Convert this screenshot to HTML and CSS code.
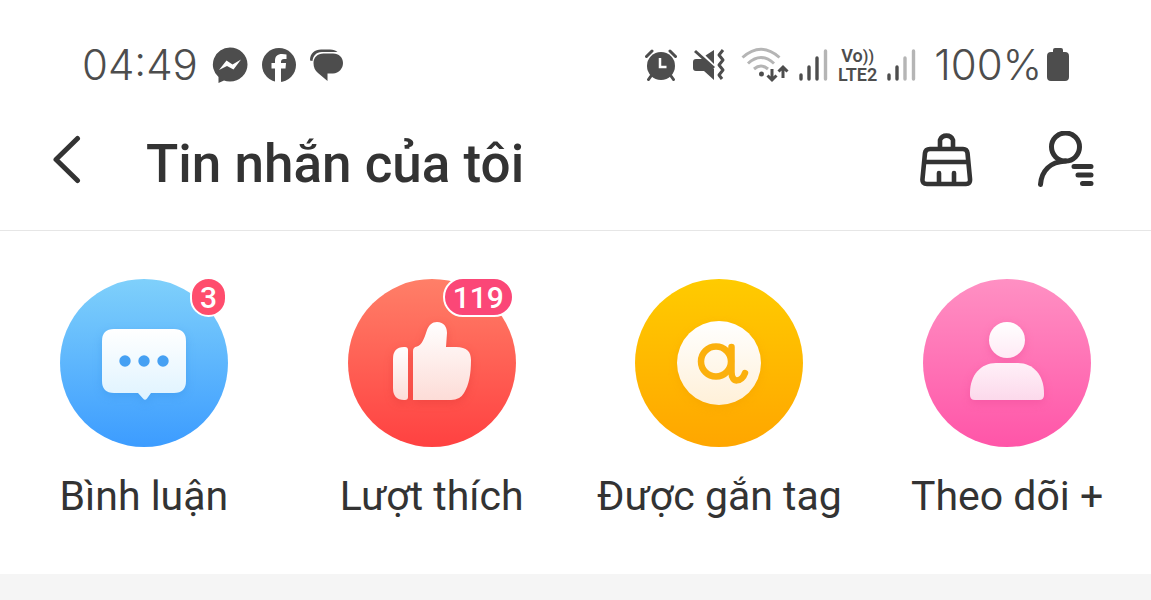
FILE: index.html
```html
<!DOCTYPE html>
<html lang="vi">
<head>
<meta charset="utf-8">
<meta name="viewport" content="width=device-width, initial-scale=1">
<title>Tin nhắn của tôi</title>
<link rel="stylesheet" href="styles.css">
</head>
<body>
<div class="status">
  <div class="status-group status-left">
    <span class="status-text">04:49</span>
    <svg width="36" height="36" viewBox="0 0 36 36" aria-hidden="true">
      <path fill="#4d4d4d" d="M18 0.5A17.5 17 0 0 1 18 34.5Q14.500 34.500 12 33.500L6.500 36V30A17.500 17 0 0 1 18 .5Z"/>
      <path fill="#fff" d="M7 23L14.500 13.500 20.500 17.500 29 12.500 21.500 22.500 15 19Z"/>
    </svg>
    <svg width="34" height="34" viewBox="0 0 34 34" aria-hidden="true">
      <circle cx="17" cy="17" r="17" fill="#4d4d4d"/>
      <path fill="#fff" d="M13 34V20.500H9.500V15H13V13C13 8 15.500 6 20 6Q22.500 6 24.500 6.500V11H22Q19 11 19 14V15H24L23.500 20.500H19V34Z"/>
    </svg>
    <svg width="34" height="34" viewBox="0 0 34 34" aria-hidden="true">
      <path fill="#4d4d4d" d="M0 12.500C0 5 5 1.500 11 1.500H20Q25 1.500 27.500 4H12C6 4 3 8 2.500 13Z"/>
      <path fill="#4d4d4d" d="M13.500 5.500H23C29 5.500 33 9.500 33 15S29 25 23 25.500H17.500V33L8 25C5 22.500 3.500 19.500 3.500 15 3.500 9.500 7.500 5.500 13.500 5.500Z"/>
    </svg>
  </div>
  <div class="status-group status-right">
    <svg width="32" height="32" viewBox="0 0 32 32" aria-hidden="true">
      <circle cx="16" cy="17" r="14" fill="#4d4d4d"/>
      <path d="M1.500 7.500L7 2M30.500 7.500L25 2M6 27L3.500 30.500M26 27L28.500 30.500" stroke="#4d4d4d" stroke-width="3" stroke-linecap="round"/>
      <path d="M15 9V18H21.500" fill="none" stroke="#fff" stroke-width="2.500"/>
    </svg>
    <svg width="32" height="32" viewBox="0 0 32 32" aria-hidden="true">
      <path fill="#4d4d4d" d="M12.500 6.500L21 1V15ZM3 10H10L21 20V31L11 22H3Q0 22 0 19V13Q0 10 3 10Z"/>
      <path d="M2 2L21 19" stroke="#4d4d4d" stroke-width="3"/>
      <path d="M30 1L26 6 30 11 26 16 30 21 26 26 29 30" fill="none" stroke="#4d4d4d" stroke-width="3" stroke-linejoin="round"/>
    </svg>
    <svg width="48" height="36" viewBox="0 0 48 36" aria-hidden="true">
      <path d="M1.500 10.500Q20 -6 38.500 10.500M7 16.500Q20 4.500 33 16.500M13 22Q20 16 27 22" fill="none" stroke="#b5b5b5" stroke-width="3"/>
      <circle cx="20.500" cy="27" r="2.500" fill="#4d4d4d"/>
      <path d="M31 22V33M26.500 28.500L31 33 35.500 28.500M42 31V20M37.500 24.500L42 20 46.500 24.500" fill="none" stroke="#4d4d4d" stroke-width="3"/>
    </svg>
    <svg width="29" height="32" viewBox="0 0 29 32" aria-hidden="true">
      <path d="M2 26V30M10 18V30M18 9V30" stroke="#4d4d4d" stroke-width="3.400" stroke-linecap="round"/>
      <path d="M26.500 2V30" stroke="#b5b5b5" stroke-width="3.400" stroke-linecap="round"/>
    </svg>
    <span class="volte"><span>Vo<small>))</small></span><span>LTE2</span></span>
    <svg width="29" height="32" viewBox="0 0 29 32" aria-hidden="true">
      <path d="M2 26V30M10 18V30" stroke="#4d4d4d" stroke-width="3.400" stroke-linecap="round"/>
      <path d="M18 9V30M26.500 2V30" stroke="#b5b5b5" stroke-width="3.400" stroke-linecap="round"/>
    </svg>
    <span class="battery">
      <span class="status-text">100%</span>
      <svg width="24" height="34" viewBox="0 0 24 34" aria-hidden="true">
        <path fill="#4d4d4d" d="M7 4V2Q7 0 9 0H15Q17 0 17 2V4H19Q23 4 23 8V29Q23 33 19 33H5Q1 33 1 29V8Q1 4 5 4Z"/>
      </svg>
    </span>
  </div>
</div>
<header class="header">
  <button class="icon-button" type="button" aria-label="Quay lại">
    <svg width="30" height="50" viewBox="0 0 30 50"><path d="M25.500 3.500L4 24.500 25.500 45.500" fill="none" stroke="#333" stroke-width="5" stroke-linecap="round" stroke-linejoin="round"/></svg>
  </button>
  <h1 class="title">Tin nhắn của tôi</h1>
  <button class="icon-button" type="button" aria-label="Dọn dẹp">
    <svg width="54" height="58" viewBox="0 0 54 58" fill="none" stroke="#333" stroke-width="4.600" stroke-linecap="round" stroke-linejoin="round">
      <path d="M20 18V9A7 7 0 0 1 33 9V18M10 18H43Q47 18 47.500 22L50 48Q50.500 53 46 53H7Q2 53 2.500 48L5 22Q5.500 18 10 18ZM5 31H48M19 42V53M34 42V53"/>
    </svg>
  </button>
  <button class="icon-button" type="button" aria-label="Danh sách theo dõi">
    <svg width="58" height="58" viewBox="0 0 58 58" fill="none" stroke="#333" stroke-width="5" stroke-linecap="round">
      <circle cx="27.500" cy="16" r="14"/>
      <path d="M27.500 30C12 31 3.500 40 2.500 53.500M36 35.500H53M40 44H53M44.500 52.500H53"/>
    </svg>
  </button>
</header>
<nav class="shortcuts">
  <a class="shortcut" href="#comments">
    <span class="disc disc-blue">
      <svg class="glyph" viewBox="0 0 168 168" aria-hidden="true">
        <defs><linearGradient id="g1" x2="0" y2="1"><stop stop-color="#fff"/><stop offset="1" stop-color="#dff3ff"/></linearGradient></defs>
        <path fill="url(#g1)" d="M54 50H114Q126 50 126 62V102Q126 114 114 114H91L87 119.500Q85 122 83 119.500L78 114H54Q42 114 42 102V62Q42 50 54 50Z"/>
        <g fill="#45a0f3"><circle cx="65" cy="82" r="5.700"/><circle cx="84" cy="82" r="5.700"/><circle cx="103" cy="82" r="5.700"/></g>
      </svg>
      <span class="badge">3</span>
    </span>
    <span class="label">Bình luận</span>
  </a>
  <a class="shortcut" href="#likes">
    <span class="disc disc-red">
      <svg class="glyph" viewBox="0 0 168 168" aria-hidden="true">
        <defs><linearGradient id="g2" x2="0" y2="1"><stop stop-color="#fff"/><stop offset="1" stop-color="#fddcd7"/></linearGradient></defs>
        <path fill="url(#g2)" d="M56 68H57Q60 68 60 71V118Q60 121 57 121H56Q45 121 45 109V80Q45 68 56 68Z"/>
        <path fill="url(#g2)" d="M65 121V72Q65 68 69 67.500C74 66 76 60 79 51C81 46 84 43 89 43C96 43 99 48 99 54L98 68H108C119 68 123 73 123 81C123 95 121 106 116 114Q112 121 103 121Z"/>
      </svg>
      <span class="badge">119</span>
    </span>
    <span class="label">Lượt thích</span>
  </a>
  <a class="shortcut" href="#tags">
    <span class="disc disc-yellow">
      <svg class="glyph" viewBox="0 0 168 168" aria-hidden="true">
        <defs><linearGradient id="g3" x2="0" y2="1"><stop stop-color="#fff"/><stop offset="1" stop-color="#fff0d8"/></linearGradient></defs>
        <circle cx="84" cy="84" r="42" fill="url(#g3)"/>
        <g fill="none" stroke="#fbb00d" stroke-width="6.500" stroke-linecap="round"><circle cx="81" cy="82.500" r="15"/><path d="M96.500 68V93C96.500 105 107 103 110 94"/></g>
      </svg>
    </span>
    <span class="label">Được gắn tag</span>
  </a>
  <a class="shortcut" href="#follows">
    <span class="disc disc-pink">
      <svg class="glyph" viewBox="0 0 168 168" aria-hidden="true">
        <defs><linearGradient id="g4" x2="0" y2="1"><stop stop-color="#fff"/><stop offset="1" stop-color="#ffeaf5"/></linearGradient><linearGradient id="g5" x2="0" y2="1"><stop stop-color="#fff0f8"/><stop offset="1" stop-color="#fcd9eb"/></linearGradient></defs>
        <circle cx="84" cy="61" r="18" fill="url(#g4)"/>
        <path fill="url(#g5)" d="M73 84H95C110 84 121 96 121 114V116Q121 121 116 121H52Q47 121 47 116V114C47 96 58 84 73 84Z"/>
      </svg>
    </span>
    <span class="label">Theo dõi +</span>
  </a>
</nav>
</body>
</html>
```
FILE: styles.css
```css
* {
  box-sizing: border-box;
}

body {
  margin: 0;
  min-height: 100vh;
  background: #f5f5f5;
  color: #333;
  font-family: Roboto, "Noto Sans", sans-serif;
}

svg {
  display: block;
  flex: none;
}

.status {
  display: flex;
  justify-content: space-between;
  align-items: center;
  height: 106px;
  padding: 24px 81px 0 82px;
  background: #fff;
  color: #4d4d4d;
}

.status-group {
  display: flex;
  align-items: center;
}

.status-left {
  gap: 14px;
}

.status-right {
  gap: 10px;
}

.status-right > svg:nth-child(-n+2) {
  margin-right: 6px;
}

.status-text {
  font-family: Inter, Roboto, sans-serif;
  font-size: 42px;
  font-weight: 300;
  line-height: 48px;
}

.volte {
  display: flex;
  flex-direction: column;
  align-items: center;
  font-size: 18px;
  font-weight: 600;
  line-height: 18px;
}

.volte small {
  font-size: 16px;
}

.battery {
  display: flex;
  align-items: center;
  gap: 4px;
  margin-left: 8px;
}

.header {
  display: flex;
  align-items: center;
  height: 125px;
  padding: 0 55px 16px 52px;
  border-bottom: 1px solid #e6e6e6;
  background: #fff;
}

.icon-button {
  padding: 0;
  border: 0;
  background: none;
  cursor: pointer;
}

.title {
  flex: 1;
  margin: 8px 0 0 64px;
  font-size: 53px;
  font-weight: 500;
  line-height: 64px;
}

.icon-button + .icon-button {
  margin-left: 64px;
}

.shortcuts {
  display: grid;
  grid-template-columns: repeat(4, 1fr);
  padding: 48px 0 53px;
  background: #fff;
}

.shortcut {
  display: flex;
  flex-direction: column;
  align-items: center;
  gap: 24px;
  color: inherit;
  text-decoration: none;
}

.disc {
  position: relative;
  width: 168px;
  height: 168px;
  border-radius: 50%;
}

.disc-blue {
  --shade: #318be055;
  background: linear-gradient(#7fd0fb, #3c9cff);
}

.disc-red {
  --shade: #d8303055;
  background: linear-gradient(#ff7f68, #ff4141);
}

.disc-yellow {
  --shade: #ee980055;
  background: linear-gradient(#ffcb00, #ffa600);
}

.disc-pink {
  --shade: #e8408e55;
  background: linear-gradient(#ff90c3, #ff55a8);
}

.glyph {
  width: 100%;
  filter: drop-shadow(0 3px 4px var(--shade));
}

.badge {
  position: absolute;
  top: -2px;
  left: 130px;
  height: 40px;
  padding: 0 8px;
  border: 2px solid #fff;
  border-radius: 20px;
  background: #ff4d6d;
  color: #fff;
  font-size: 30px;
  font-weight: 500;
  line-height: 37px;
  text-align: center;
}

.disc-red .badge {
  left: 95px;
  background: #fb4777;
}

.label {
  font-size: 41px;
  line-height: 50px;
  white-space: nowrap;
}
```
